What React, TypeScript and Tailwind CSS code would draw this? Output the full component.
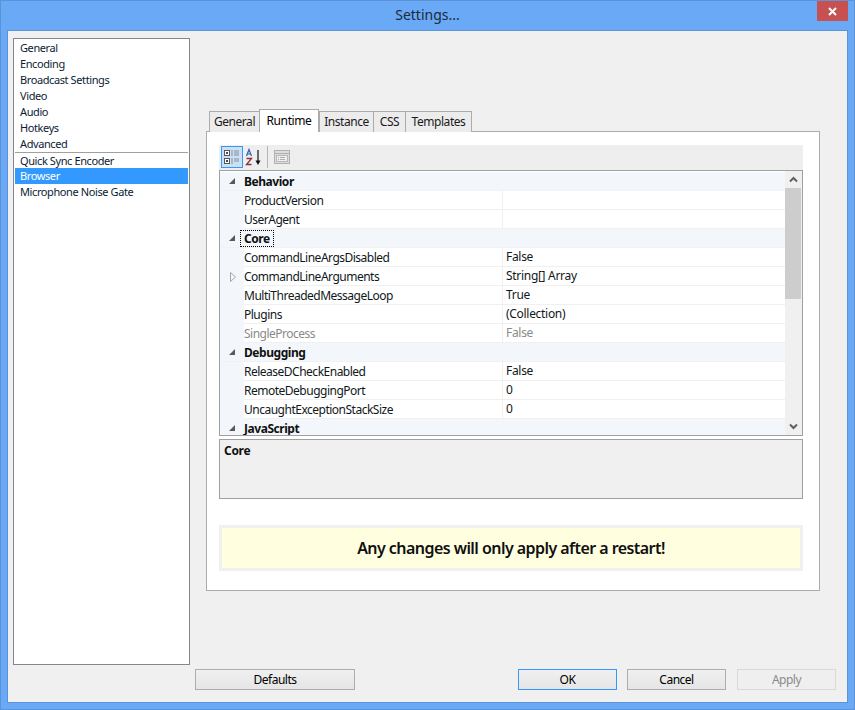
const NAV_TOP = ["General", "Encoding", "Broadcast Settings", "Video", "Audio", "Hotkeys", "Advanced"];
const NAV_BOTTOM = ["Quick Sync Encoder", "Browser", "Microphone Noise Gate"];
const TABS = [
  { label: "General", w: "w-[50px]" },
  { label: "Runtime", w: "w-[60px]", active: true },
  { label: "Instance", w: "w-[54px]" },
  { label: "CSS", w: "w-[32px]" },
  { label: "Templates", w: "w-[67px]" },
];

type Row = { cat?: boolean; name: string; value?: string; expand?: boolean; dim?: boolean; focus?: boolean };

const ROWS: Row[] = [
  { cat: true, name: "Behavior" },
  { name: "ProductVersion", value: "" },
  { name: "UserAgent", value: "" },
  { cat: true, name: "Core", focus: true },
  { name: "CommandLineArgsDisabled", value: "False" },
  { name: "CommandLineArguments", value: "String[] Array", expand: true },
  { name: "MultiThreadedMessageLoop", value: "True" },
  { name: "Plugins", value: "(Collection)" },
  { name: "SingleProcess", value: "False", dim: true },
  { cat: true, name: "Debugging" },
  { name: "ReleaseDCheckEnabled", value: "False" },
  { name: "RemoteDebuggingPort", value: "0" },
  { name: "UncaughtExceptionStackSize", value: "0" },
  { cat: true, name: "JavaScript" },
];

function ExpandedGlyph() {
  return (
    <svg width="8" height="8" viewBox="0 0 8 8" className="shrink-0">
      <path d="M7 1 V7 H1 Z" fill="#595959" />
    </svg>
  );
}

function CollapsedGlyph() {
  return (
    <svg width="8" height="10" viewBox="0 0 8 10" className="shrink-0">
      <path d="M1.5 0.5 L6.5 5 L1.5 9.5 Z" fill="none" stroke="#a6a6a6" />
    </svg>
  );
}

function CategorizedIcon() {
  return (
    <svg width="16" height="16" viewBox="0 0 16 16">
      <rect x="0.5" y="1.5" width="5" height="5" fill="#fff" stroke="#555" />
      <rect x="0.5" y="9.5" width="5" height="5" fill="#fff" stroke="#555" />
      <path d="M2 4h2M3 3v2M2 12h2M3 11v2" stroke="#111" />
      <path d="M7 2h2M10 2h5M7 4h2M10 4h5M7 6h2M10 6h5M7 10h2M10 10h5M7 12h2M10 12h5" stroke="#8a8f96" />
      <path d="M7 14h2" stroke="#8a8f96" />
    </svg>
  );
}

function SortIcon() {
  return (
    <svg width="18" height="18" viewBox="0 0 18 18">
      <path d="M1.5 8 L4 1.5 L6.5 8 M2.5 6 H5.5" fill="none" stroke="#2f5fb0" strokeWidth="1.2" />
      <path d="M1.5 10.5 H6.5 L1.5 16.5 H6.5" fill="none" stroke="#8f2f3a" strokeWidth="1.3" />
      <path d="M13 2 V15" stroke="#111" strokeWidth="1.2" />
      <path d="M10.5 12.5 L13 17 L15.5 12.5 Z" fill="#111" />
    </svg>
  );
}

function PagesIcon() {
  return (
    <svg width="16" height="16" viewBox="0 0 16 16">
      <rect x="0.5" y="1.5" width="15" height="13" fill="#dcdcdc" stroke="#b0b0b0" />
      <path d="M1 4.5 H15" stroke="#b0b0b0" />
      <rect x="2.5" y="6.5" width="11" height="6" fill="#efefef" stroke="#b8b8b8" />
      <path d="M4 8.5h1M6 8.5h5M4 10.5h1M6 10.5h5" stroke="#b0b0b0" />
    </svg>
  );
}

function WinButton({ label, className }: { label: string; className: string }) {
  return (
    <button className={"h-[21px] w-[99px] border text-[12px] tracking-[-0.5px] bg-gradient-to-b from-[#f0f0f0] to-[#e5e5e5] " + className}>
      {label}
    </button>
  );
}

export default function App() {
  return (
    <div className="w-[855px] h-[710px] flex flex-col bg-[#69a9f5] border border-[#5b92d8] text-[#000] text-[12px] leading-[16px] font-['Noto_Sans','Open_Sans',sans-serif] overflow-hidden">
      <div className="h-[29px] shrink-0 flex items-start relative">
        <div className="flex-1 text-center text-[14px] leading-[28px] text-[#1c2a3a]">Settings...</div>
        <div className="absolute right-[6px] top-0 w-[31px] h-[20px] bg-[#c75050] flex items-center justify-center">
          <svg width="9" height="9" viewBox="0 0 9 9">
            <path d="M1 1 L8 8 M8 1 L1 8" stroke="#fff" strokeWidth="2" />
          </svg>
        </div>
      </div>

      <div className="mx-[6px] mb-[6px] flex-1 flex bg-[#f0f0f0] border border-[#5b92d8] pl-[5px] pt-[7px]">
        <div className="w-[177px] h-[627px] shrink-0 bg-white border border-[#828790] p-[1px]">
          {NAV_TOP.map((n) => (
            <div key={n} className="h-[16px] pl-[5px] text-[11px] text-[#0b1b33] tracking-[-0.4px]">{n}</div>
          ))}
          {NAV_BOTTOM.map((n, i) => (
            <div
              key={n}
              className={
                "h-[16px] pl-[5px] text-[11px] tracking-[-0.4px] " +
                (i === 0 ? "border-t border-[#a0a0a0] leading-[15px] " : "") +
                (n === "Browser" ? "bg-[#3399ff] text-white" : "text-[#0b1b33]")
              }
            >
              {n}
            </div>
          ))}
        </div>

        <div className="w-[641px] ml-[5px] flex flex-col">
          <div className="pl-[11px] pt-[71px] w-[625px]">
            <div className="flex items-end pl-[3px] h-[23px] relative z-10 -mb-px">
              {TABS.map((t) => (
                <div
                  key={t.label}
                  className={
                    t.active
                      ? t.w + " h-[23px] bg-white border border-b-0 border-[#acacac] text-center leading-[21px] tracking-[-0.4px]"
                      : t.w + " h-[21px] bg-[#ececec] border border-b-0 border-l-[#acacac] border-r-0 border-t-[#acacac] last:border-r text-center leading-[20px] tracking-[-0.45px] text-[#1a1a1a] border-[#acacac]"
                  }
                >
                  {t.label}
                </div>
              ))}
            </div>

            <div className="h-[460px] bg-white border border-[#acacac] pl-[12px] pr-[16px] pt-[13px]">
              <div className="h-[25px] bg-[#eeeeee] flex items-start pt-[1px] pl-[2px]">
                <div className="w-[22px] h-[22px] bg-[#c9e0f7] border border-[#3399ff] flex items-center justify-center">
                  <CategorizedIcon />
                </div>
                <div className="w-[22px] h-[22px] flex items-center justify-center">
                  <SortIcon />
                </div>
                <div className="w-px h-[22px] bg-[#b5b5b5] mx-[2px]" />
                <div className="w-[22px] h-[22px] flex items-center justify-center ml-[1px]">
                  <PagesIcon />
                </div>
              </div>

              <div className="h-[266px] border border-[#a0a0a0] flex bg-white">
                <div className="w-[566px] pt-[1px] overflow-hidden">
                  {ROWS.map((r) =>
                    r.cat ? (
                      <div key={r.name} className="h-[19px] shrink-0 flex items-center bg-[#f3f7fc] border-b border-[#f0f2f5]">
                        <div className="w-[24px] pl-[8px] flex">
                          <ExpandedGlyph />
                        </div>
                        <span
                          className={
                            "font-bold text-[12px] tracking-[-0.45px] text-[#101010] pt-[1px] px-[4px] -ml-[4px] " +
                            (r.focus ? "outline-1 -outline-offset-1 outline-dotted outline-black" : "")
                          }
                        >
                          {r.name}
                        </span>
                      </div>
                    ) : (
                      <div key={r.name} className="h-[19px] flex">
                        <div className="w-[24px] bg-[#f3f7fc] flex items-center pl-[9px]">
                          {r.expand && <CollapsedGlyph />}
                        </div>
                        <div
                          className={
                            "w-[259px] border-b border-r border-[#f0f0f0] leading-[19px] tracking-[-0.5px] " +
                            (r.dim ? "text-[#8a8a8a]" : "text-[#101820]")
                          }
                        >
                          {r.name}
                        </div>
                        <div
                          className={
                            "flex-1 border-b border-[#f0f0f0] pl-[3px] leading-[18px] tracking-[-0.3px] " +
                            (r.dim ? "text-[#8a8a8a]" : "text-[#101820]")
                          }
                        >
                          {r.value}
                        </div>
                      </div>
                    ),
                  )}
                </div>
                <div className="w-[17px] bg-[#f0f0f0] flex flex-col items-center justify-between">
                  <div className="w-full">
                    <div className="h-[17px] flex items-center justify-center">
                      <svg width="9" height="7" viewBox="0 0 9 7">
                        <path d="M1 5.5 L4.5 2 L8 5.5" fill="none" stroke="#606060" strokeWidth="2" />
                      </svg>
                    </div>
                    <div className="h-[111px] bg-[#cdcdcd] w-[16px]" />
                  </div>
                  <div className="h-[17px] flex items-center justify-center">
                    <svg width="9" height="7" viewBox="0 0 9 7">
                      <path d="M1 1.5 L4.5 5 L8 1.5" fill="none" stroke="#606060" strokeWidth="2" />
                    </svg>
                  </div>
                </div>
              </div>

              <div className="mt-[3px] h-[60px] border border-[#a0a0a0] bg-[#f0f0f0] pl-[4px] pt-[3px] font-bold tracking-[-0.3px] text-[#101010]">
                Core
              </div>

              <div className="mt-[26px] h-[46px] border-[3px] border-[#f0f0f0] bg-[#ffffe0] flex items-center justify-center text-[16px] font-semibold tracking-[-0.55px] text-[#101010]">
                Any changes will only apply after a restart!
              </div>
            </div>
          </div>

          <div className="mt-[78px] flex">
            <button className="h-[21px] w-[160px] border border-[#adadad] text-[12px] tracking-[-0.5px] bg-gradient-to-b from-[#f0f0f0] to-[#e5e5e5]">
              Defaults
            </button>
            <div className="ml-[163px] flex">
              <WinButton label="OK" className="border-[#3399ff]" />
              <WinButton label="Cancel" className="border-[#adadad] ml-[10px]" />
              <button className="ml-[11px] h-[21px] w-[99px] border border-[#d9d9d9] text-[12px] tracking-[-0.5px] text-[#8a8a8a] bg-[#efefef]">
                Apply
              </button>
            </div>
          </div>
        </div>
      </div>
    </div>
  );
}
